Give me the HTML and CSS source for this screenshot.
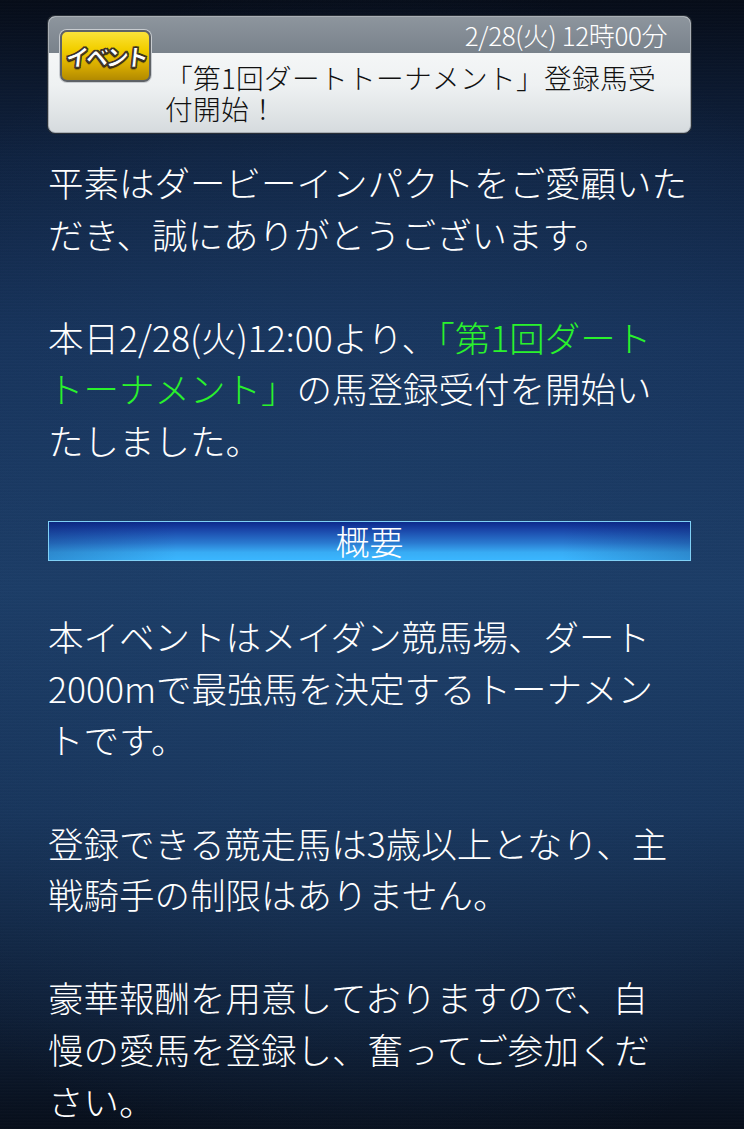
FILE: index.html
```html
<!DOCTYPE html>
<html lang="ja">
<head>
<meta charset="utf-8">
<title>お知らせ</title>
<link rel="stylesheet" href="styles.css">
</head>
<body>
<div class="page">
  <div class="card">
    <div class="card-head"><span class="date">2/28(火) 12時00分</span></div>
    <div class="card-body">「第1回ダートトーナメント」登録馬受<br>付開始！</div>
    <div class="badge"><span>イベント</span></div>
  </div>

  <div class="content">
    <p>平素はダービーインパクトをご愛顧いた<br>だき、誠にありがとうございます。</p>
    <p>本日2/28(火)12:00より、<span class="green">「第1回ダート<br>トーナメント」</span>の馬登録受付を開始い<br>たしました。</p>
    <div class="section-bar">概要</div>
    <p>本イベントはメイダン競馬場、ダート<br>2000mで最強馬を決定するトーナメン<br>トです。</p>
    <p>登録できる競走馬は3歳以上となり、主<br>戦騎手の制限はありません。</p>
    <p>豪華報酬を用意しておりますので、自<br>慢の愛馬を登録し、奮ってご参加くだ<br>さい。</p>
  </div>
</div>
</body>
</html>
```

FILE: styles.css
```css
html, body {
  margin: 0;
  padding: 0;
}
body {
  width: 744px;
  height: 1129px;
  overflow: hidden;
  font-family: "Noto Sans CJK JP", "Noto Sans", sans-serif;
  color: #ffffff;
  background:
    repeating-linear-gradient(180deg, rgba(255,255,255,0.012) 0px, rgba(255,255,255,0.012) 1px, rgba(0,0,0,0.02) 2px, rgba(0,0,0,0) 3px),
    radial-gradient(ellipse 75% 55% at 50% 52%, rgba(30,64,106,0.55) 0%, rgba(30,64,106,0) 100%),
    linear-gradient(180deg, #060c18 0%, #0f2240 14%, #16325a 30%, #1b3c66 52%, #17345a 72%, #0e1e36 90%, #070e1a 100%);
}
.page {
  padding: 16px 53px 0 48px;
}
.card {
  position: relative;
  height: 115px;
  border-radius: 7px;
  border: 1px solid #a9afb5;
  background: linear-gradient(180deg, #fbfcfc 0%, #eef1f2 60%, #d6dbde 100%);
  overflow: hidden;
  box-shadow: 0 0 0 1px #2a3038;
}
.card-head {
  height: 36px;
  background: linear-gradient(180deg, #8d959d 0%, #79828b 100%);
  display: flex;
  justify-content: flex-end;
  align-items: center;
  padding-right: 23px;
}
.date {
  font-size: 26px;
  line-height: 30px;
  color: #ffffff;
  font-weight: 300;
  letter-spacing: -0.4px;
}
.card-body {
  padding: 9px 0 0 116px;
  font-size: 27.7px;
  line-height: 31px;
  color: #111111;
  font-weight: 300;
  white-space: nowrap;
  letter-spacing: 0.3px;
}
.badge {
  position: absolute;
  left: 11px;
  top: 13px;
  width: 91px;
  height: 52px;
  box-sizing: border-box;
  border-radius: 7px;
  border: 2px solid #5e6266;
  box-shadow: 0 0 0 1px #c8ccd0;
  background: linear-gradient(180deg, #fbe33a 0%, #f2cf00 35%, #d8ac00 70%, #b28a00 100%);
  display: flex;
  align-items: center;
  justify-content: center;
}
.badge span {
  font-size: 23px;
  font-weight: 900;
  color: #ffffff;
  letter-spacing: -3px;
  transform: skewX(-6deg);
  -webkit-text-stroke: 1px #3a3020;
  text-shadow: 1px 1px 0 #3a3020, -1px 1px 0 #3a3020, 1px -1px 0 #3a3020, -1px -1px 0 #3a3020, 0 2px 1px #2a2010;
}
.content {
  padding-top: 23px;
  font-size: 35.5px;
  line-height: 51.6px;
  font-weight: 300;
  white-space: nowrap;
}
.content p {
  margin: 0 0 51.6px 0;
}
.green {
  color: #2af22c;
}
.section-bar {
  height: 40px;
  box-sizing: border-box;
  margin-top: 55.6px;
  border: 1px solid #7fd0f6;
  background:
    linear-gradient(90deg, rgba(10,30,90,0.25) 0%, rgba(10,30,90,0) 20%, rgba(10,30,90,0) 80%, rgba(10,30,90,0.25) 100%),
    linear-gradient(180deg, #0c2a8c 0%, #1a45a8 20%, #2a7ad0 55%, #38acf4 80%, #3ab6ff 100%);
  text-align: center;
  font-size: 34px;
  line-height: 38px;
  color: #ffffff;
  margin-bottom: 49px;
}
```
